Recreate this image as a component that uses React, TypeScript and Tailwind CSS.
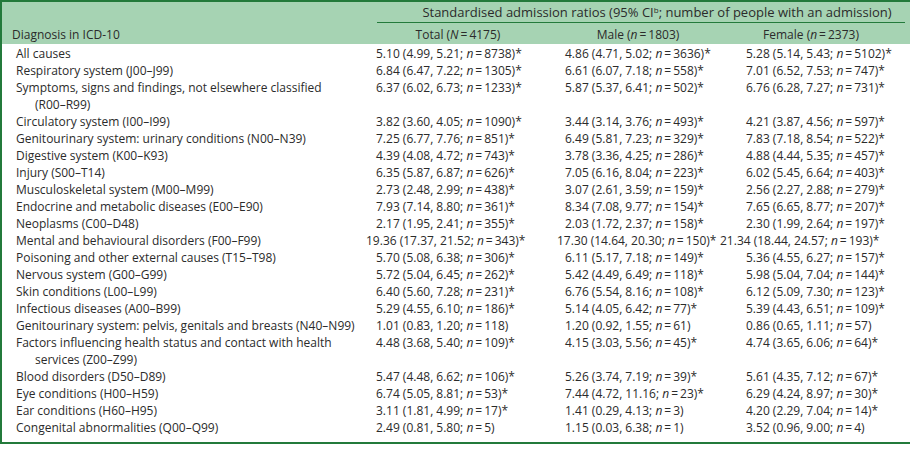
type Row = { label: string[]; total: string; male: string; female: string; shift?: [number, number, number] };

const rows: Row[] = [
  { label: ['All causes'], total: '5.10 (4.99, 5.21; n = 8738)*', male: '4.86 (4.71, 5.02; n = 3636)*', female: '5.28 (5.14, 5.43; n = 5102)*' },
  { label: ['Respiratory system (J00–J99)'], total: '6.84 (6.47, 7.22; n = 1305)*', male: '6.61 (6.07, 7.18; n = 558)*', female: '7.01 (6.52, 7.53; n = 747)*' },
  { label: ['Symptoms, signs and findings, not elsewhere classified', '(R00–R99)'], total: '6.37 (6.02, 6.73; n = 1233)*', male: '5.87 (5.37, 6.41; n = 502)*', female: '6.76 (6.28, 7.27; n = 731)*' },
  { label: ['Circulatory system (I00–I99)'], total: '3.82 (3.60, 4.05; n = 1090)*', male: '3.44 (3.14, 3.76; n = 493)*', female: '4.21 (3.87, 4.56; n = 597)*' },
  { label: ['Genitourinary system: urinary conditions (N00–N39)'], total: '7.25 (6.77, 7.76; n = 851)*', male: '6.49 (5.81, 7.23; n = 329)*', female: '7.83 (7.18, 8.54; n = 522)*' },
  { label: ['Digestive system (K00–K93)'], total: '4.39 (4.08, 4.72; n = 743)*', male: '3.78 (3.36, 4.25; n = 286)*', female: '4.88 (4.44, 5.35; n = 457)*' },
  { label: ['Injury (S00–T14)'], total: '6.35 (5.87, 6.87; n = 626)*', male: '7.05 (6.16, 8.04; n = 223)*', female: '6.02 (5.45, 6.64; n = 403)*' },
  { label: ['Musculoskeletal system (M00–M99)'], total: '2.73 (2.48, 2.99; n = 438)*', male: '3.07 (2.61, 3.59; n = 159)*', female: '2.56 (2.27, 2.88; n = 279)*' },
  { label: ['Endocrine and metabolic diseases (E00–E90)'], total: '7.93 (7.14, 8.80; n = 361)*', male: '8.34 (7.08, 9.77; n = 154)*', female: '7.65 (6.65, 8.77; n = 207)*' },
  { label: ['Neoplasms (C00–D48)'], total: '2.17 (1.95, 2.41; n = 355)*', male: '2.03 (1.72, 2.37; n = 158)*', female: '2.30 (1.99, 2.64; n = 197)*' },
  { label: ['Mental and behavioural disorders (F00–F99)'], total: '19.36 (17.37, 21.52; n = 343)*', male: '17.30 (14.64, 20.30; n = 150)*', female: '21.34 (18.44, 24.57; n = 193)*', shift: [-10, -8, -26] },
  { label: ['Poisoning and other external causes (T15–T98)'], total: '5.70 (5.08, 6.38; n = 306)*', male: '6.11 (5.17, 7.18; n = 149)*', female: '5.36 (4.55, 6.27; n = 157)*' },
  { label: ['Nervous system (G00–G99)'], total: '5.72 (5.04, 6.45; n = 262)*', male: '5.42 (4.49, 6.49; n = 118)*', female: '5.98 (5.04, 7.04; n = 144)*' },
  { label: ['Skin conditions (L00–L99)'], total: '6.40 (5.60, 7.28; n = 231)*', male: '6.76 (5.54, 8.16; n = 108)*', female: '6.12 (5.09, 7.30; n = 123)*' },
  { label: ['Infectious diseases (A00–B99)'], total: '5.29 (4.55, 6.10; n = 186)*', male: '5.14 (4.05, 6.42; n = 77)*', female: '5.39 (4.43, 6.51; n = 109)*' },
  { label: ['Genitourinary system: pelvis, genitals and breasts (N40–N99)'], total: '1.01 (0.83, 1.20; n = 118)', male: '1.20 (0.92, 1.55; n = 61)', female: '0.86 (0.65, 1.11; n = 57)' },
  { label: ['Factors influencing health status and contact with health', 'services (Z00–Z99)'], total: '4.48 (3.68, 5.40; n = 109)*', male: '4.15 (3.03, 5.56; n = 45)*', female: '4.74 (3.65, 6.06; n = 64)*' },
  { label: ['Blood disorders (D50–D89)'], total: '5.47 (4.48, 6.62; n = 106)*', male: '5.26 (3.74, 7.19; n = 39)*', female: '5.61 (4.35, 7.12; n = 67)*' },
  { label: ['Eye conditions (H00–H59)'], total: '6.74 (5.05, 8.81; n = 53)*', male: '7.44 (4.72, 11.16; n = 23)*', female: '6.29 (4.24, 8.97; n = 30)*' },
  { label: ['Ear conditions (H60–H95)'], total: '3.11 (1.81, 4.99; n = 17)*', male: '1.41 (0.29, 4.13; n = 3)', female: '4.20 (2.29, 7.04; n = 14)*' },
  { label: ['Congenital abnormalities (Q00–Q99)'], total: '2.49 (0.81, 5.80; n = 5)', male: '1.15 (0.03, 6.38; n = 1)', female: '3.52 (0.96, 9.00; n = 4)' },
];

// "n" is set in italics, with thin spaces round the equals sign
function Value({ text, shift = 0 }: { text: string; shift?: number }) {
  const [before, after] = text.split('; n = ');
  return (
    <div className="whitespace-nowrap" style={shift ? { marginLeft: shift } : undefined}>
      {before}; <i>n</i>{'\u2009=\u2009'}
      {after}
    </div>
  );
}

export default function App() {
  return (
    <div className="w-[910px] h-[461px] bg-white font-['Open_Sans',sans-serif] text-[12px] text-[#2b2b2b]">
      <div className="border-l-2 border-t-2 border-b-2 border-[#237a3b] pb-[6px]">
        <div className="bg-[#a6d3b3]">
          <div className="flex h-[21px]">
            <div className="w-[375px]" />
            <div className="w-[528px] border-b border-[#237a3b] pl-[32px] text-center text-[13px] leading-[20px]">
              Standardised admission ratios (95% CI<sup className="text-[8px]">b</sup>; number of people with an admission)
            </div>
          </div>
          <div className="grid grid-cols-[374px_164px_196px_150px] h-[21px] items-center pt-[2px]">
            <div className="pl-[10px]">Diagnosis in ICD-10</div>
            <div className="text-center">
              Total (<i>N</i>{'\u2009=\u2009'}4175)
            </div>
            <div className="text-center">
              Male (<i>n</i>{'\u2009=\u2009'}1803)
            </div>
            <div className="text-center">
              Female (<i>n</i>{'\u2009=\u2009'}2373)
            </div>
          </div>
        </div>
        <div className="leading-[17px] pt-[1px]">
          {rows.map((r) => (
            <div key={r.label[0]} className="grid grid-cols-[374px_189px_181px_1fr]">
              <div className="pl-[14px]">
                {r.label.map((l, i) => (
                  <div key={l} className={i > 0 ? 'pl-[19px]' : ''}>
                    {l}
                  </div>
                ))}
              </div>
              <Value text={r.total} shift={r.shift?.[0]} />
              <Value text={r.male} shift={r.shift?.[1]} />
              <Value text={r.female} shift={r.shift?.[2]} />
            </div>
          ))}
        </div>
      </div>
    </div>
  );
}
